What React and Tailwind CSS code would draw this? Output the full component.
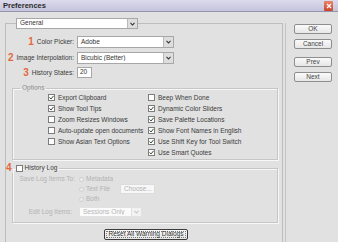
import React from "react";

function Check({ on, dim }) {
  return (
    <span
      className={`w-[7px] h-[7px] shrink-0 border bg-white flex items-center justify-center ${
        dim ? "border-[#c4c4c4]" : "border-[#7d7d7d]"
      }`}
    >
      {on && (
        <svg width="5" height="5" viewBox="0 0 5 5">
          <path d="M0.5 2.4 L2 4 L4.6 0.8" fill="none" stroke="#3a4a3a" strokeWidth="1" />
        </svg>
      )}
    </span>
  );
}

function Radio() {
  return <span className="w-[5px] h-[5px] shrink-0 rounded-full border border-[#cfcfcf] bg-[#ececec]" />;
}

function Arrow({ dim }) {
  return (
    <span
      className={`w-[10px] h-full shrink-0 border-l flex items-center justify-center ${
        dim ? "border-[#e0e0e0] bg-[#f2f2f2]" : "border-[#b9b9b9] bg-[#dedede]"
      }`}
    >
      <svg width="5" height="4" viewBox="0 0 5 4">
        <path d="M0.5 0.8 L2.5 3 L4.5 0.8" fill="none" stroke={dim ? "#c8c8c8" : "#333"} strokeWidth="1.1" />
      </svg>
    </span>
  );
}

function Select({ value, w, h = "h-[12px]", dim }) {
  return (
    <div
      className={`${w} ${h} flex items-center border ${
        dim ? "border-[#e2e2e2] bg-[#fbfbfb] text-[#b5b5b5]" : "border-[#a7a7a7] bg-white text-[#333]"
      }`}
    >
      <span className="flex-1 pl-[3px] leading-none truncate">{value}</span>
      <Arrow dim={dim} />
    </div>
  );
}

function Num({ n }) {
  return <span className="text-[10px] font-bold leading-none text-[#e4683c]">{n}</span>;
}

function Btn({ children, className = "" }) {
  return (
    <div
      className={`h-[10px] flex items-center justify-center rounded-[2px] border border-[#8e8e8e] bg-gradient-to-b from-[#fafafa] to-[#e6e6e6] text-[#444] leading-none ${className}`}
    >
      {children}
    </div>
  );
}

const leftOpts = [
  ["Export Clipboard", true],
  ["Show Tool Tips", true],
  ["Zoom Resizes Windows", false],
  ["Auto-update open documents", false],
  ["Show Asian Text Options", false],
];

const rightOpts = [
  ["Beep When Done", false],
  ["Dynamic Color Sliders", true],
  ["Save Palette Locations", true],
  ["Show Font Names in English", true],
  ["Use Shift Key for Tool Switch", true],
  ["Use Smart Quotes", true],
];

export default function App() {
  return (
    <div className="w-[338px] h-[242px] overflow-hidden bg-[#e1e1e1] font-['Liberation_Sans',Arial,sans-serif] text-[6.5px] text-[#3a3a3a]">
      {/* Title bar */}
      <div className="h-[12px] flex items-center justify-between bg-gradient-to-b from-[#dcdaec] to-[#c6c4dc] border-b border-[#9593ad]">
        <span className="pl-[3px] text-[7.5px] font-bold text-[#2a2a2a] leading-none">Preferences</span>
        <span className="w-[9px] h-[10px] mr-[5px] rounded-[1px] bg-gradient-to-b from-[#e8836a] to-[#c9442a] flex items-center justify-center">
          <svg width="6" height="6" viewBox="0 0 6 6">
            <path d="M1 1 L5 5 M5 1 L1 5" stroke="#fff" strokeWidth="1.3" />
          </svg>
        </span>
      </div>

      <div className="flex">
        {/* Main panel */}
        <div className="ml-[5px] mt-[11px] w-[278px] h-[240px] border-l border-t border-r border-[#bdbdbd] shrink-0">
          <div className="-mt-[6px] ml-[10px]">
            <Select value="General" w="w-[122px]" h="h-[11px]" />
          </div>

          {/* Rows */}
          <div className="mt-[7px] flex items-center h-[12px]">
            <div className="w-[68px] flex items-center justify-end gap-[3px]">
              <Num n="1" />
              <span>Color Picker:</span>
            </div>
            <div className="ml-[3px]">
              <Select value="Adobe" w="w-[97px]" />
            </div>
          </div>
          <div className="mt-[4px] flex items-center h-[12px]">
            <div className="w-[68px] flex items-center justify-end gap-[3px]">
              <Num n="2" />
              <span className="whitespace-nowrap">Image Interpolation:</span>
            </div>
            <div className="ml-[3px]">
              <Select value="Bicubic (Better)" w="w-[97px]" />
            </div>
          </div>
          <div className="mt-[3px] flex items-center h-[11px]">
            <div className="w-[68px] flex items-center justify-end gap-[3px]">
              <Num n="3" />
              <span>History States:</span>
            </div>
            <div className="ml-[3px] w-[15px] h-[11px] border border-[#a7a7a7] bg-white flex items-center pl-[2px] leading-none">
              20
            </div>
          </div>

          {/* Options */}
          <fieldset className="mt-[6px] ml-[6px] w-[266px] border border-[#c6c6c6] shadow-[inset_1px_1px_0_#f7f7f7,1px_1px_0_#f7f7f7] pb-[1px]">
            <legend className="ml-[7px] px-[2px] leading-[8px] text-[#8a8a8a]">Options</legend>
            <div className="flex pl-[35px]">
              <div className="w-[100px] flex flex-col">
                {leftOpts.map(([t, on]) => (
                  <div key={t} className="h-[11px] flex items-center gap-[3px] whitespace-nowrap">
                    <Check on={on} />
                    <span>{t}</span>
                  </div>
                ))}
              </div>
              <div className="flex flex-col">
                {rightOpts.map(([t, on]) => (
                  <div key={t} className="h-[11px] flex items-center gap-[3px] whitespace-nowrap">
                    <Check on={on} />
                    <span>{t}</span>
                  </div>
                ))}
              </div>
            </div>
          </fieldset>

          {/* History log */}
          <fieldset className="mt-[3px] ml-[6px] w-[266px] border border-[#c6c6c6] shadow-[inset_1px_1px_0_#f7f7f7,1px_1px_0_#f7f7f7] pb-[4px]">
            <legend className="-ml-[7px] pr-[2px] leading-[10px] flex items-center gap-[4px]">
              <Num n="4" />
              <span className="flex items-center gap-[2px]">
                <Check />
                <span className="text-[#3a3a3a]">History Log</span>
              </span>
            </legend>
            <div className="text-[#b3b3b3] mt-[1px]">
              <div className="h-[10px] flex items-center">
                <span className="w-[62px] text-right whitespace-nowrap">Save Log Items To:</span>
                <span className="ml-[4px] flex items-center gap-[2px]">
                  <Radio />
                  <span>Metadata</span>
                </span>
              </div>
              <div className="h-[10px] flex items-center">
                <span className="ml-[66px] flex items-center gap-[2px] w-[41px]">
                  <Radio />
                  <span>Text File</span>
                </span>
                <span className="w-[35px] h-[10px] border border-[#dcdcdc] bg-[#f7f7f7] flex items-center pl-[3px] leading-none">
                  Choose...
                </span>
              </div>
              <div className="h-[10px] flex items-center">
                <span className="ml-[66px] flex items-center gap-[2px]">
                  <Radio />
                  <span>Both</span>
                </span>
              </div>
              <div className="mt-[2px] h-[12px] flex items-center">
                <span className="w-[59px] text-right whitespace-nowrap">Edit Log Items:</span>
                <div className="ml-[7px]">
                  <Select value="Sessions Only" w="w-[63px]" h="h-[10px]" dim />
                </div>
              </div>
            </div>
          </fieldset>

          <div className="mt-[6px] ml-[98px] w-[84px] h-[11px] rounded-[2px] border border-[#3c3c3c] bg-gradient-to-b from-[#fafafa] to-[#e4e4e4] p-[1px]">
            <div className="h-full border border-dotted border-[#777] flex items-center justify-center leading-none text-[#333] whitespace-nowrap">
              Reset All Warning Dialogs
            </div>
          </div>
        </div>

        {/* Buttons */}
        <div className="ml-[2px] mt-[11px] h-[240px] border-l border-[#c4c4c4] pl-[8px] pt-[1px] flex flex-col">
          <Btn className="w-[38px]">OK</Btn>
          <Btn className="w-[38px] mt-[5px]">Cancel</Btn>
          <Btn className="w-[38px] mt-[8px]">Prev</Btn>
          <Btn className="w-[38px] mt-[5px]">Next</Btn>
        </div>
      </div>
    </div>
  );
}
